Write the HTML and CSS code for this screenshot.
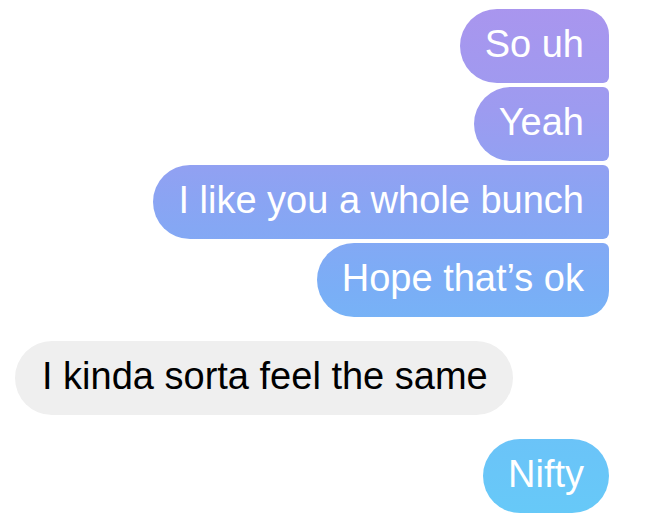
FILE: index.html
```html
<!DOCTYPE html>
<html>
<head>
<meta charset="utf-8">
<link rel="stylesheet" href="styles.css">
</head>
<body>
<div class="thread">
  <div class="group sent">
    <div class="bubble out first">So uh</div>
    <div class="bubble out mid">Yeah</div>
    <div class="bubble out mid">I like you a whole bunch</div>
    <div class="bubble out last">Hope that’s ok</div>
  </div>
  <div class="group received">
    <div class="bubble in">I kinda sorta feel the same</div>
  </div>
  <div class="group sent">
    <div class="bubble out solo">Nifty</div>
  </div>
</div>
</body>
</html>
```
FILE: styles.css
```css
html, body {
  margin: 0;
  padding: 0;
  background: #ffffff;
}

body {
  font-family: "Liberation Sans", Arial, sans-serif;
}

.thread {
  display: flex;
  flex-direction: column;
  gap: 24px;
  padding: 9px 52px 0 15px;
}

.group {
  display: flex;
  flex-direction: column;
  gap: 4px;
}

.sent {
  align-items: flex-end;
}

.received {
  align-items: flex-start;
}

.bubble {
  height: 74px;
  box-sizing: border-box;
  padding: 0 25px 3px 25px;
  display: flex;
  align-items: center;
  font-size: 38px;
  white-space: nowrap;
  border-radius: 37px;
}

.out {
  color: #ffffff;
  background-image: linear-gradient(to bottom, #aa95ee 0px, #9d9bf0 110px, #8aa4f3 200px, #7aaef6 290px, #6cc2f8 420px, #66caf8 528px);
  background-attachment: fixed;
}

.first {
  border-radius: 37px 26px 6px 37px;
}

.mid {
  border-radius: 37px 6px 6px 37px;
}

.last {
  border-radius: 37px 6px 26px 37px;
}

.solo {
  border-radius: 37px;
}

.in {
  color: #000000;
  background: #efefef;
  padding-left: 27px;
}
```
